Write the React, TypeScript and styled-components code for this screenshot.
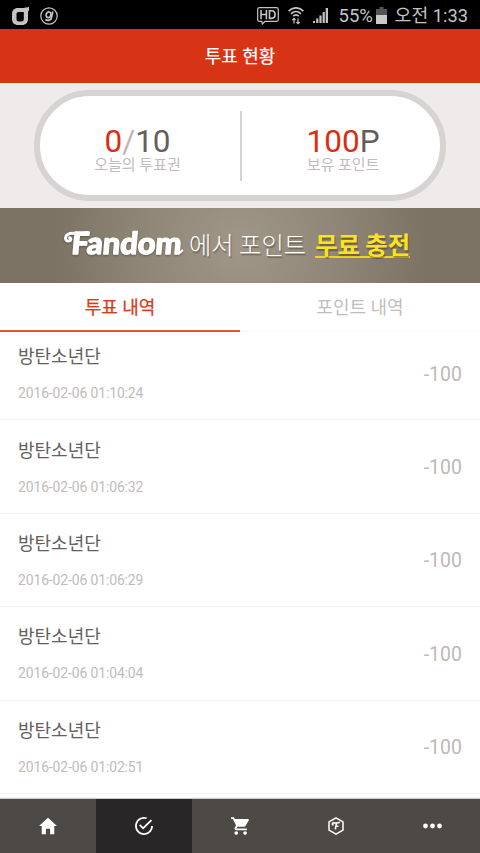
import React from 'react';
import styled, { createGlobalStyle } from 'styled-components';
import { IoMdCart, IoMdCheckmarkCircleOutline, IoMdHome } from 'react-icons/io';

const GlobalStyle = createGlobalStyle`
  * { box-sizing: border-box; }
  html, body { margin: 0; padding: 0; background: #fff; }
  body { font-family: Roboto, 'Noto Sans CJK KR', sans-serif; overflow: hidden; }
`;

const Screen = styled.div`
  width: 480px;
  height: 853px;
  display: flex;
  flex-direction: column;
  overflow: hidden;
  background: #fff;
`;

const StatusBar = styled.div`
  height: 29px;
  flex: none;
  display: flex;
  align-items: center;
  justify-content: space-between;
  padding: 2px 12px 0 12px;
  background: #000;
  color: #c4c4c4;
`;

const StatusGroup = styled.div`
  display: flex;
  align-items: center;
  svg { display: block; flex: none; }
`;

const Percent = styled.span`
  margin-left: 11px;
  width: 34px;
  font-size: 18.5px;
  line-height: 24px;
  white-space: nowrap;
`;

const Clock = styled.span`
  margin-left: 8px;
  font-size: 18.3px;
  line-height: 24px;
  white-space: nowrap;
`;

const Header = styled.header`
  height: 54px;
  flex: none;
  display: flex;
  align-items: center;
  justify-content: center;
  padding-top: 2px;
  background: #d73315;
  color: #fff;
  font-size: 18px;
  font-weight: 400;
  line-height: 26px;
  -webkit-text-stroke: 0.2px #fff;
`;

const Summary = styled.section`
  height: 125px;
  flex: none;
  padding: 7px 34px 0;
  background: #eeebea;
`;

const Pill = styled.div`
  height: 111px;
  display: flex;
  align-items: center;
  border: 6px solid #d7d3d2;
  border-radius: 56px;
  background: #fff;
`;

const Stat = styled.div<{ $side: 'left' | 'right' }>`
  width: ${({ $side }) => ($side === 'left' ? 200 : 210)}px;
  flex: none;
  display: flex;
  flex-direction: column;
  align-items: center;
  padding: ${({ $side }) => ($side === 'left' ? '9px 5px 0 0' : '9px 8px 0 0')};
`;

const Divider = styled.div`
  width: 2px;
  height: 70px;
  flex: none;
  margin-top: 1px;
  background: #d7d3d2;
`;

const Figure = styled.div`
  font-size: 31.5px;
  line-height: 30px;
  color: #655e5c;
`;

const Accent = styled.span`
  color: #dc2d10;
`;

const Slash = styled.span`
  color: #bdb6b5;
`;

const Caption = styled.div`
  font-size: 15px;
  line-height: 16px;
  color: #c2bbba;
`;

const Banner = styled.section`
  height: 75px;
  flex: none;
  display: flex;
  align-items: center;
  padding: 0 0 3px 62px;
  background: radial-gradient(circle 190px at 50% 50%, #a19788 0%, #8f8576 55%, #7c7264 100%);
  color: #fff;
  text-shadow: 1px 2px 1px rgba(60, 50, 40, 0.45);
  font-size: 24.3px;
  line-height: 32px;
  white-space: nowrap;
`;

const Wordmark = styled.svg`
  display: block;
  flex: none;
  overflow: visible;
  text-shadow: none;
  filter: drop-shadow(0 1.5px 1px rgba(60, 50, 40, 0.5));
  text { font-family: Lato, sans-serif; font-weight: 900; }
`;

const BannerText = styled.span`
  margin-left: 5px;
  font-weight: 300;
  font-family: 'Noto Sans CJK KR', sans-serif;
`;

const BannerLink = styled.span`
  margin-left: 9px;
  font-weight: 700;
  font-family: 'Noto Sans CJK KR', sans-serif;
  color: #fae31d;
  height: 28px;
  line-height: 28px;
  border-bottom: 2px solid #ead51e;
`;

const Tabs = styled.nav`
  height: 49px;
  flex: none;
  display: flex;
`;

const Tab = styled.div<{ $active?: boolean }>`
  flex: 1;
  display: flex;
  align-items: center;
  justify-content: center;
  padding-top: 2px;
  border-bottom: ${({ $active }) => ($active ? '2px solid #e2533c' : '1px solid #f8f7f7')};
  color: ${({ $active }) => ($active ? '#dc3a20' : '#c3bcbb')};
  font-size: 18px;
  line-height: 26px;
  -webkit-text-stroke: ${({ $active }) => ($active ? '0.25px #dc3a20' : '0')};
`;

const List = styled.main`
  flex: 1;
  min-height: 0;
  overflow: hidden;
`;

const Row = styled.div`
  height: 93.4px;
  display: flex;
  align-items: center;
  justify-content: space-between;
  padding: 0 18px;
  border-bottom: 1px solid #f5f4f4;
  &:first-child { margin-top: -5px; }
`;

const RowText = styled.div`
  display: flex;
  flex-direction: column;
  gap: 14px;
`;

const Name = styled.div`
  font-size: 18px;
  line-height: 26px;
  color: #655e5d;
`;

const Stamp = styled.div`
  font-size: 14px;
  letter-spacing: -0.15px;
  line-height: 18px;
  color: #c2bbba;
`;

const Amount = styled.div`
  padding-top: 3px;
  font-size: 19.5px;
  line-height: 24px;
  color: #bfb8b7;
`;

const BottomBar = styled.nav`
  height: 55px;
  flex: none;
  display: flex;
  border-top: 1px solid #c9c8c8;
`;

const NavItem = styled.div<{ $active?: boolean }>`
  flex: 1;
  display: flex;
  align-items: center;
  justify-content: center;
  background: ${({ $active }) => ($active ? '#282626' : '#4d4947')};
  color: #fff;
`;

const records = [
  { name: '방탄소년단', time: '2016-02-06 01:10:24', amount: '-100' },
  { name: '방탄소년단', time: '2016-02-06 01:06:32', amount: '-100' },
  { name: '방탄소년단', time: '2016-02-06 01:06:29', amount: '-100' },
  { name: '방탄소년단', time: '2016-02-06 01:04:04', amount: '-100' },
  { name: '방탄소년단', time: '2016-02-06 01:02:51', amount: '-100' },
];

const CarrierIcon = () => (
  <svg width="17" height="18" viewBox="0 0 17 18" fill="#c4c4c4">
    <path fillRule="evenodd" d="M17 0v3.500q-.3.800-1 .8V12c0 3.800-2.200 6-6 6H6c-3.800 0-6-2.200-6-6V7c0-3.700 2.200-6 6-6 4 0 7 0 11-1ZM7 5C5.200 5 4.500 5.700 4.500 7.300V12c0 1.700.8 2.500 2.500 2.500h2.300c1.700 0 2.500-.8 2.500-2.500V5H7Z" />
  </svg>
);

const CircleGIcon = () => (
  <svg width="18" height="18" viewBox="0 0 18 18" fill="none" stroke="#c4c4c4">
    <circle cx="9" cy="9" r="8.2" strokeWidth="1.2" />
    <ellipse cx="8.5" cy="7.8" rx="2.3" ry="2.9" strokeWidth="1.7" transform="rotate(18 8.500 7.800)" />
    <path d="M12.800 4.500 11.500 10.500C11 13.300 8 14 5.300 12.500" strokeWidth="1.7" />
  </svg>
);

const HdIcon = () => (
  <svg width="22" height="18" viewBox="0 0 22 18" fill="none" stroke="#c4c4c4">
    <path d="M2.500.7h17q1.800 0 1.800 1.800v10q0 1.800-1.800 1.800H8l-2.600 2.700-.6-2.700H2.500q-1.800 0-1.800-1.800v-10Q.7.700 2.500.7Z" strokeWidth="1.200" />
    <path d="M4 3v9.200M9.400 3v9.200M4 7.500h5.400M12.500 3.700v7.700h2c2.700 0 3.600-1.300 3.600-3.800s-.9-3.900-3.600-3.900Z" strokeWidth="1.600" />
  </svg>
);

const WifiIcon = () => (
  <svg width="16" height="18" viewBox="0 0 16 18" fill="none" stroke="#c4c4c4">
    <path d="M.6 4.200C5-.3 11-.3 15.400 4.200M3 6.800c3-3 7-3 10 0M5.200 9.200c1.700-1.700 3.900-1.700 5.600 0" strokeWidth="1.700" />
    <path d="M6 16.500v-5M4.300 13.200 6 11.400l1.500 1.600M10 11.500v5.200M8.500 15l1.500 1.700 1.700-1.700" strokeWidth="1.200" />
  </svg>
);

const SignalIcon = () => (
  <svg width="15" height="15" viewBox="0 0 15 15" fill="#c4c4c4">
    <path d="M0 13h2v2H0ZM3.200 10.500h2.200V15H3.200ZM6.400 7.500h2.200V15H6.400ZM9.600 4h2.200v11H9.600ZM12.700 0H15v15h-2.300Z" />
  </svg>
);

const BatteryIcon = () => (
  <svg width="11" height="17" viewBox="0 0 11 17">
    <path d="M3.500 0h4v2H11v6H0V2h3.500Z" fill="#545454" />
    <path d="M0 8h11v9H0Z" fill="#c8c8c8" />
  </svg>
);

const HexIcon = () => (
  <svg width="16" height="18" viewBox="0 0 16 18" fill="none" stroke="#fff">
    <path d="M8 .9 15 4.900v8.200L8 17.100 1 13.100V4.900Z" strokeWidth="1.500" />
    <path d="M5.600 7.900C3.900 8 3.900 5.900 5.600 5.900c2 0 4.400.5 6.200-.6M8.500 6.200 7.300 12.400M7.900 9.200h2.600" strokeWidth="1.600" />
  </svg>
);

const DotsIcon = () => (
  <svg width="19" height="6" viewBox="0 0 19 6" fill="#fff">
    <circle cx="2.500" cy="3" r="2.400" />
    <circle cx="9.500" cy="3" r="2.400" />
    <circle cx="16.500" cy="3" r="2.400" />
  </svg>
);

const Spacer = styled.span<{ $w: number }>`
  width: ${({ $w }) => $w}px;
`;

export default function App() {
  return (
    <>
      <GlobalStyle />
      <Screen>
        <StatusBar>
          <StatusGroup>
            <CarrierIcon />
            <Spacer $w={11} />
            <CircleGIcon />
          </StatusGroup>
          <StatusGroup>
            <HdIcon />
            <Spacer $w={9} />
            <WifiIcon />
            <Spacer $w={9} />
            <SignalIcon />
            <Percent>55%</Percent>
            <Spacer $w={3} />
            <BatteryIcon />
            <Clock>오전 1:33</Clock>
          </StatusGroup>
        </StatusBar>
        <Header>투표 현황</Header>
        <Summary>
          <Pill>
            <Stat $side="left">
              <Figure><Accent>0</Accent><Slash>/</Slash>10</Figure>
              <Caption>오늘의 투표권</Caption>
            </Stat>
            <Divider />
            <Stat $side="right">
              <Figure><Accent>100</Accent>P</Figure>
              <Caption>보유 포인트</Caption>
            </Stat>
          </Pill>
        </Summary>
        <Banner>
          <Wordmark width="122" height="30" viewBox="0 0 122 30" fill="#fff" stroke="#fff" strokeLinejoin="round">
            <text y="24.500" fontSize="30.500" strokeWidth="1.300" transform="translate(3 0) skewX(-5)">
              <tspan x="8" textLength="110" lengthAdjust="spacingAndGlyphs">Fandom</tspan>
            </text>
            <path d="M25 3.500C19 6 13 3.500 8 4.500 2 6 2.500 13 7 12c2.300-.6 2.300-3 .6-3.300" fill="none" strokeWidth="3" strokeLinecap="round" />
            <path d="M115.500 24q3 .3 4.700-2.500" fill="none" strokeWidth="2.400" strokeLinecap="round" />
          </Wordmark>
          <BannerText>에서 포인트</BannerText>
          <BannerLink>무료 충전</BannerLink>
        </Banner>
        <Tabs>
          <Tab $active>투표 내역</Tab>
          <Tab>포인트 내역</Tab>
        </Tabs>
        <List>
          {records.map((record) => (
            <Row key={record.time}>
              <RowText>
                <Name>{record.name}</Name>
                <Stamp>{record.time}</Stamp>
              </RowText>
              <Amount>{record.amount}</Amount>
            </Row>
          ))}
        </List>
        <BottomBar>
          <NavItem><IoMdHome size={22} /></NavItem>
          <NavItem $active><IoMdCheckmarkCircleOutline size={22} /></NavItem>
          <NavItem><IoMdCart size={22} /></NavItem>
          <NavItem><HexIcon /></NavItem>
          <NavItem><DotsIcon /></NavItem>
        </BottomBar>
      </Screen>
    </>
  );
}
